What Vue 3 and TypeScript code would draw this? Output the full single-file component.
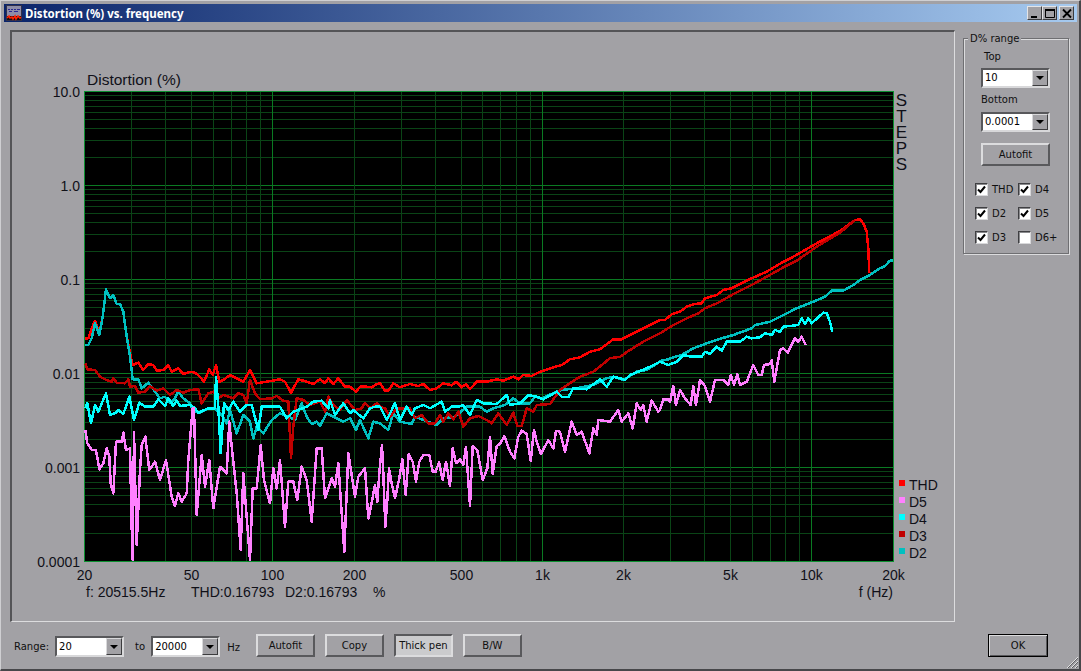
<script setup lang="ts">
type Pt = [number, number]

const PLOT = { left: 84, right: 893, top: 91, bottom: 561 }
const xOf = (f: number) => Math.floor(84.5 + (Math.log10(f) - Math.log10(20)) * 269.5) + 0.5
const yOf = (v: number) => Math.floor(561.5 - (Math.log10(v) + 4) * 94) + 0.5

const freqs: number[] = []
for (const d of [10, 100, 1000, 10000]) {
  for (let m = 1; m <= 9; m++) {
    const f = m * d
    if (f > 20 && f < 20000) freqs.push(f)
  }
}
const vLines = freqs.map((f) => ({ x: xOf(f), major: f === 100 || f === 1000 || f === 10000 }))

const hLines: { y: number; major: boolean }[] = []
for (let e = -4; e <= 0; e++) {
  for (let m = 1; m <= 9; m++) {
    const v = m * Math.pow(10, e)
    if (v > 0.0001 && v < 9.99) hLines.push({ y: yOf(v), major: m === 1 })
  }
}

const yLabels = [
  { t: '10.0', v: 10 },
  { t: '1.0', v: 1 },
  { t: '0.1', v: 0.1 },
  { t: '0.01', v: 0.01 },
  { t: '0.001', v: 0.001 },
  { t: '0.0001', v: 0.0001 },
].map((l) => ({ t: l.t, y: yOf(l.v) + 5 }))

const xLabels = [
  { t: '20', f: 20 },
  { t: '50', f: 50 },
  { t: '100', f: 100 },
  { t: '200', f: 200 },
  { t: '500', f: 500 },
  { t: '1k', f: 1000 },
  { t: '2k', f: 2000 },
  { t: '5k', f: 5000 },
  { t: '10k', f: 10000 },
  { t: '20k', f: 20000 },
].map((l) => ({ t: l.t, x: xOf(l.f) }))

const steps = ['S', 'T', 'E', 'P', 'S']

const legend = [
  { t: 'THD', c: '#ff0000' },
  { t: 'D5', c: '#ff80ff' },
  { t: 'D4', c: '#00ffff' },
  { t: 'D3', c: '#c00000' },
  { t: 'D2', c: '#00c0c0' },
].map((l, i) => ({ ...l, y: 490 + i * 17 }))

// Traces read off the reference in 3x crops: [crop origin x, crop origin y, points]
const toPts = (segs: [number, number, number[]][]): string => {
  const out: Pt[] = []
  for (const [ox, oy, p] of segs) {
    for (let i = 0; i < p.length; i += 2) out.push([ox + p[i] / 3, oy + p[i + 1] / 3])
  }
  return out.map(([x, y]) => `${x.toFixed(1)},${y.toFixed(1)}`).join(' ')
}

const thd = toPts([
  [80, 280, [16,175,25,175,35,145,45,122,58,160,68,110,78,28,90,55,100,45,110,72,120,72,130,95,140,170,150,220,158,255,175,248,190,270,205,252,220,255,230,272,250,270,265,255,275,275,295,265,310,282,330,275,345,278,360,290,372,305,388,268,398,285,408,255,418,305,430,300,450,285,470,295,490,305,510,270,530,310,560,305,600,298,615,305,633,338,655,298,680,305,700,312,720,297,735,310,745,295,760,312,775,295,795,320,810,320,828,335,840,320,860,320,875,322,890,312]],
  [380, 280, [0,310,15,332,25,332,40,310,60,322,90,312,115,318,130,312,150,330,170,325,190,310,215,316,228,305,245,322,258,312,270,328,290,305,320,305,350,298,370,302,400,290,415,298,430,285,455,288,480,275,520,262,545,255,570,238,600,232,630,215,660,208,700,178,725,178,770,155,800,140,840,120]],
  [660, 200, [0,360,15,360,35,343,60,335,80,320,105,312,125,310,135,295,170,285,190,270,215,265,275,235,320,215,365,188,400,170,470,130,540,93,585,60,600,58,610,70,620,95,625,145,628,220]],
])
const d3 = toPts([
  [80, 280, [16,250,22,268,45,270,60,290,80,300,95,305,100,295,110,308,135,310,145,298,150,320,165,318,175,338,195,335,210,318,230,332,250,325,270,345,290,330,310,338,330,330,355,328,365,370,385,340,400,335,415,355,430,345,460,355,475,340,490,345,500,370,510,300,525,340,540,358,575,355,590,348,610,362,625,365,633,535,640,440,650,355,670,360,690,375,720,365,735,395,745,350,760,375,780,390,800,360,825,390,845,385,855,368,870,385,890,370]],
  [380, 280, [0,380,15,385,30,410,50,385,90,385,105,415,125,405,145,430,165,430,180,405,190,425,205,400,220,418,235,395,250,440,270,415,295,408,320,420,335,430,355,400,380,435,400,398,412,438,425,438,440,385,460,395,470,375,510,372,540,330,570,310,600,290,640,275,690,235,720,230,750,210,790,185,840,160]],
  [660, 200, [0,400,35,378,80,355,115,340,135,325,175,308,215,285,275,255,320,230,365,205,410,182,470,140,540,98,585,60]],
])
const d2 = toPts([
  [80, 280, [16,195,25,195,35,175,45,130,58,165,68,110,78,28,90,55,100,45,110,72,120,72,130,95,140,170,150,230,158,298,175,298,185,325,205,308,225,335,240,355,255,350,270,370,285,355,295,335,310,355,330,370,340,395,360,398,385,385,405,385,425,405,440,430,450,390,470,460,490,405,510,425,520,475,530,440,550,460,575,420,600,400,625,410,645,420,665,370,680,410,695,432,710,425,720,438,740,400,760,410,790,425,810,415,828,450,840,420,865,475,880,425]],
  [380, 280, [0,430,25,450,40,400,60,425,95,432,105,410,130,420,170,435,190,415,225,410,260,380,300,380,320,395,340,385,375,375,400,355,420,370,450,370,465,350,485,355,530,335,545,330,590,325,640,315,680,295,700,290,730,300,770,275,800,270,840,245]],
  [660, 200, [0,483,25,478,40,472,65,465,100,445,135,432,185,415,220,405,275,385,285,375,330,365,360,350,410,325,460,305,495,290,515,272,550,272,580,255,600,240,630,225,660,205,675,198,690,182,698,182]],
])
const d4 = toPts([
  [80, 280, [16,385,22,370,33,430,45,375,55,395,78,340,90,405,105,400,115,390,130,402,148,350,162,420,178,368,195,380,220,380,235,358,255,378,265,355,280,378,290,362,300,378,330,375,345,385,355,398,385,385,405,385,408,290,415,380,422,520,432,370,445,390,460,365,480,395,500,375,515,375,535,450,545,380,600,380,620,415,640,395,680,380,700,365,725,362,745,385,750,360,765,405,790,370,810,400,820,390,850,415,870,385,885,380]],
  [380, 280, [0,380,20,420,45,370,60,420,80,380,95,405,105,385,130,375,150,385,185,365,195,395,215,380,235,380,250,375,270,405,290,360,310,370,350,372,380,345,390,375,420,370,445,345,470,350,490,358,530,335,545,350,565,352,580,325,620,328,660,298,680,320,700,290,720,295,735,300,750,285,800,265,840,245]],
  [660, 200, [0,485,25,495,50,485,70,465,95,470,125,470,135,455,150,462,170,440,185,452,200,425,240,425,260,410,275,415,300,412,315,400,335,405,345,390,360,395,370,380,415,375,425,355,435,372,445,355,455,370,490,338,500,340,510,365,517,395]],
])
const d5 = toPts([
  [80, 280, [16,450,22,490,35,510,48,510,58,568,70,550,80,505,88,530,92,610,100,640,108,485,125,485,130,458,138,510,150,505,155,745,158,840,162,455,170,795,180,570,185,495,196,470,208,570,225,545,240,600,258,540,275,650,285,678,295,640,305,665,320,640,325,540,338,385,342,385,350,705,365,525,375,620,388,540,400,685,420,560,440,580,448,425,455,500,470,640,482,810,490,580,510,840,518,625,530,625,542,495,552,600,570,670,580,565,590,625,600,540,615,740,625,605,640,605,652,660,665,560,680,600,695,725,710,505,725,505,735,655,755,595,765,620,775,550,793,815,805,520,825,650,835,590,855,565,865,715]],
  [370, 430, [0,245,15,165,22,215,28,130,36,45,40,130,46,290,52,210,57,115,65,160,75,205,88,145,97,88,107,195,116,72,128,95,138,155,148,95,160,75,178,75,188,125,197,125,207,97,218,150,228,95,240,168,248,55,258,100,270,88,280,105,288,50,300,228,308,48,322,60,338,150,352,115,360,20,368,132,380,48,390,42,403,18,420,65,433,85,445,20,455,2,470,12,482,92,492,0,500,35,513,72,535,30]],
  [380, 280, [520,505,528,452,540,455,555,515,575,425,590,465,605,455,628,520,640,445,650,465,655,420,690,425,715,390,725,425,745,400,758,445,770,370,782,390,790,375,800,425,815,362,835,395]],
  [660, 200, [0,630,10,598,25,598,30,605,40,558,48,615,60,570,75,595,92,615,100,558,108,615,120,540,135,558,150,605,165,540,190,540,205,555,212,525,222,555,232,522,240,555,260,545,280,495,295,525,305,525,312,495,330,492,335,480,343,545,360,450,370,445,383,458,405,415,415,425,425,410,437,435]],
])

const traces = [
  { pts: thd, c: '#ff0000' },
  { pts: d2, c: '#00c0c0' },
  { pts: d3, c: '#c00000' },
  { pts: d4, c: '#00ffff' },
  { pts: d5, c: '#ff80ff' },
]

const checks = [
  { t: 'THD', on: true },
  { t: 'D4', on: true },
  { t: 'D2', on: true },
  { t: 'D5', on: true },
  { t: 'D3', on: true },
  { t: 'D6+', on: false },
]

const footButtons = [
  { t: 'Autofit', pressed: false },
  { t: 'Copy', pressed: false },
  { t: 'Thick pen', pressed: true },
  { t: 'B/W', pressed: false },
]
</script>

<template>
  <div class="window">
    <header class="titlebar">
      <svg class="app-icon" width="16" height="16" viewBox="0 0 16 16">
        <rect x="0" y="0" width="16" height="16" fill="#8d8da8" />
        <rect x="0.5" y="0.5" width="15" height="15" fill="none" stroke="#30304a" />
        <path d="M2 4.5h2M5 4.5h2M8 4.5h2M11 4.5h3M3 6.5h3M8 6.5h4" stroke="#2a2a90" stroke-width="1.2" />
        <rect x="1" y="11" width="14" height="4" fill="#101010" />
        <path d="M1 13l2-2 1 2 2-1 1 2 2-3 1 3 2-3 2 2 1-1" fill="none" stroke="#ff2000" stroke-width="1.6" />
      </svg>
      <span class="title-text">Distortion (%) vs. frequency</span>
      <div class="caption-btns">
        <button class="cap"><svg width="12" height="11" viewBox="0 0 12 11"><rect x="2" y="8" width="6" height="2" fill="#000" /></svg></button>
        <button class="cap"><svg width="12" height="11" viewBox="0 0 12 11"><path d="M1.5 1.5h9v8h-9z" fill="none" stroke="#000" /><rect x="1" y="1" width="10" height="2" fill="#000" /></svg></button>
        <button class="cap close"><svg width="12" height="11" viewBox="0 0 12 11"><path d="M2 1.5l8 8M10 1.5l-8 8" stroke="#000" stroke-width="1.8" /></svg></button>
      </div>
    </header>

    <div class="body">
      <main class="main">
        <section class="panel">
          <svg class="chart" width="942" height="589" viewBox="12 32 942 589">
            <text class="t15" x="87" y="85">Distortion (%)</text>
            <rect :x="PLOT.left + 0.5" :y="PLOT.top + 0.5" :width="PLOT.right - PLOT.left" :height="PLOT.bottom - PLOT.top" fill="#000" />
            <g shape-rendering="crispEdges">
              <line v-for="l in hLines" :key="'h' + l.y" :x1="PLOT.left" :x2="PLOT.right" :y1="l.y" :y2="l.y" :stroke="l.major ? '#0a7a22' : '#0a4416'" />
              <line v-for="l in vLines" :key="'v' + l.x" :x1="l.x" :x2="l.x" :y1="PLOT.top" :y2="PLOT.bottom" :stroke="l.major ? '#0a7a22' : '#0a4416'" />
              <rect :x="PLOT.left + 0.5" :y="PLOT.top + 0.5" :width="PLOT.right - PLOT.left" :height="PLOT.bottom - PLOT.top" fill="none" stroke="#0c9030" />
            </g>
            <g shape-rendering="crispEdges" fill="none" stroke-width="2.5" stroke-linejoin="round">
              <polyline v-for="t in traces" :key="t.c" :points="t.pts" :stroke="t.c" />
            </g>
            <text v-for="l in yLabels" :key="l.t" class="t14" x="80" :y="l.y" text-anchor="end">{{ l.t }}</text>
            <text v-for="l in xLabels" :key="l.t" class="t14" :x="l.x" y="580" text-anchor="middle">{{ l.t }}</text>
            <text class="t14" x="86" y="597">f: 20515.5Hz</text>
            <text class="t14" x="191" y="597">THD:0.16793</text>
            <text class="t14" x="285" y="597">D2:0.16793</text>
            <text class="t14" x="373" y="597">%</text>
            <text class="t14" x="893" y="597" text-anchor="end">f (Hz)</text>
            <text class="t17" text-anchor="middle" y="106">
              <tspan v-for="(s, i) in steps" :key="i" x="901.5" :dy="i === 0 ? 0 : 16">{{ s }}</tspan>
            </text>
            <g v-for="l in legend" :key="l.t">
              <rect x="899" :y="l.y - 10" width="6" height="6" :fill="l.c" />
              <text class="t14" x="909" :y="l.y">{{ l.t }}</text>
            </g>
          </svg>
        </section>

        <footer class="toolbar">
          <span class="lbl range-lbl">Range:</span>
          <div class="combo foot-combo"><span class="val">20</span><span class="arrow"><i /></span></div>
          <span class="lbl to-lbl">to</span>
          <div class="combo foot-combo"><span class="val">20000</span><span class="arrow"><i /></span></div>
          <span class="lbl hz-lbl">Hz</span>
          <div class="foot-btns">
            <button v-for="b in footButtons" :key="b.t" class="btn" :class="{ pressed: b.pressed }">{{ b.t }}</button>
          </div>
        </footer>
      </main>

      <aside class="side">
        <div class="group">
          <span class="group-title">D% range</span>
          <span class="lbl top-lbl">Top</span>
          <div class="combo"><span class="val">10</span><span class="arrow"><i /></span></div>
          <span class="lbl bottom-lbl">Bottom</span>
          <div class="combo"><span class="val">0.0001</span><span class="arrow"><i /></span></div>
          <button class="btn side-btn">Autofit</button>
          <div class="checks">
            <label v-for="c in checks" :key="c.t" class="check">
              <span class="box">
                <svg v-if="c.on" width="9" height="9" viewBox="0 0 9 9"><path d="M1 4.5l2.5 2.5 4.5-5.5" fill="none" stroke="#000" stroke-width="2" /></svg>
              </span>
              <span class="lbl">{{ c.t }}</span>
            </label>
          </div>
        </div>
        <button class="btn ok">OK</button>
      </aside>
    </div>

    <svg class="grip" width="13" height="13" viewBox="0 0 13 13">
      <path d="M12 1L1 12M12 5L5 12M12 9L9 12" stroke="#e0e0e0" />
      <path d="M12 2L2 12M12 6L6 12M12 10L10 12" stroke="#606064" />
    </svg>
  </div>
</template>

<style scoped>
.window {
  position: relative;
  box-sizing: border-box;
  width: 1081px;
  height: 671px;
  overflow: hidden;
  background: #a2a1a5;
  border-top: 1px solid #cfcfd2;
  border-left: 1px solid #cfcfd2;
  border-right: 2px solid #47474a;
  border-bottom: 2px solid #47474a;
  padding: 3px 2px 0 3px;
  font-family: "DejaVu Sans", sans-serif;
  font-size: 10px;
  color: #101010;
}
.titlebar {
  display: flex;
  align-items: center;
  height: 18px;
  padding: 0 3px 0 2px;
  background: linear-gradient(90deg, #0a246a 0%, #a6caf0 100%);
}
.app-icon {
  flex: none;
}
.title-text {
  margin-left: 3px;
  font-family: "Noto Sans", sans-serif;
  font-weight: 700;
  font-size: 11.5px;
  color: #fff;
  white-space: nowrap;
}
.caption-btns {
  margin-left: auto;
  display: flex;
}
.cap {
  box-sizing: border-box;
  width: 15px;
  height: 14px;
  padding: 0;
  display: flex;
  align-items: center;
  justify-content: center;
  background: #a2a1a5;
  border: 1px solid;
  border-color: #e4e4e6 #3c3c3e #3c3c3e #e4e4e6;
}
.close {
  margin-left: 2px;
}
.body {
  display: flex;
  padding: 8px 0 0 6px;
}
.main {
  width: 945px;
  flex: none;
}
.panel {
  box-sizing: border-box;
  width: 945px;
  height: 592px;
  border-style: solid;
  border-width: 2px 1px 1px 2px;
  border-color: #545457 #dcdcde #dcdcde #545457;
}
.chart {
  display: block;
}
.t14 {
  font: 14px "Liberation Sans", sans-serif;
  fill: #101018;
}
.t15 {
  font: 15.5px "Liberation Sans", sans-serif;
  fill: #101018;
}
.t17 {
  font: 17px "Liberation Sans", sans-serif;
  fill: #101018;
}
.toolbar {
  display: flex;
  align-items: flex-end;
  height: 23px;
  margin-top: 12px;
  padding-left: 4px;
}
.lbl {
  white-space: nowrap;
  line-height: 14px;
}
.range-lbl {
  margin: 0 6px 3px 0;
}
.to-lbl {
  margin: 0 6px 3px 11px;
}
.hz-lbl {
  margin: 0 0 2px 7px;
}
.foot-btns {
  display: flex;
  gap: 10px;
  margin-left: 16px;
}
.combo {
  box-sizing: border-box;
  display: flex;
  width: 69px;
  height: 21px;
  background: #fff;
  border: 2px solid;
  border-color: #58585b #d8d8da #d8d8da #58585b;
}
.val {
  flex: 1;
  padding-left: 2px;
  line-height: 17px;
  color: #000;
}
.arrow {
  box-sizing: border-box;
  width: 16px;
  display: flex;
  align-items: center;
  justify-content: center;
  background: #a2a1a5;
  border: 1px solid;
  border-color: #d8d8da #3c3c3e #3c3c3e #d8d8da;
}
.arrow i {
  width: 0;
  height: 0;
  border-left: 4px solid transparent;
  border-right: 4px solid transparent;
  border-top: 4px solid #000;
}
.btn {
  box-sizing: border-box;
  width: 59px;
  height: 23px;
  padding: 0;
  background: #a2a1a5;
  font-family: "DejaVu Sans", sans-serif;
  font-size: 10px;
  color: #101010;
  border: 2px solid;
  border-color: #dcdcde #59595c #59595c #dcdcde;
}
.pressed {
  background: #cbcbcd;
  border-color: #59595c #dcdcde #dcdcde #59595c;
}
.side {
  position: relative;
  flex: 1;
  display: flex;
  flex-direction: column;
  padding: 8px 0 0 8px;
}
.group {
  position: relative;
  box-sizing: border-box;
  display: flex;
  flex-direction: column;
  align-items: flex-start;
  width: 106px;
  height: 216px;
  padding: 11px 0 0 17px;
  border: 1px solid #6f6f72;
  box-shadow: inset 1px 1px 0 #dcdcde, 1px 1px 0 #dcdcde;
}
.group-title {
  position: absolute;
  left: 4px;
  top: -7px;
  padding: 0 2px;
  line-height: 14px;
  white-space: nowrap;
  background: #a2a1a5;
}
.top-lbl {
  margin: 0 0 4px 3px;
}
.bottom-lbl {
  margin: 5px 0 5px 0;
}
.group .combo {
  width: 69px;
  height: 20px;
}
.group .val {
  line-height: 16px;
}
.side-btn {
  width: 69px;
  height: 23px;
  margin-top: 11px;
}
.checks {
  display: grid;
  grid-template-columns: 43px 1fr;
  row-gap: 11px;
  margin: 17px 0 0 -6px;
}
.check {
  display: flex;
  align-items: center;
  gap: 4px;
  height: 13px;
}
.box {
  box-sizing: border-box;
  width: 13px;
  height: 13px;
  display: flex;
  align-items: center;
  justify-content: center;
  background: #fff;
  border: 1px solid;
  border-color: #3f3f42 #d8d8da #d8d8da #3f3f42;
  box-shadow: inset 1px 1px 0 #8a8a8d;
}
.ok {
  position: absolute;
  left: 33px;
  top: 604px;
  width: 60px;
  height: 23px;
  border: 1px solid #000;
  box-shadow: inset 1px 1px 0 #dcdcde, inset -1px -1px 0 #59595c;
  font-size: 10px;
}
.grip {
  position: absolute;
  right: 0;
  bottom: 0;
}
</style>

<style>
html,
body {
  margin: 0;
  overflow: hidden;
  background: #a2a1a5;
}
</style>
